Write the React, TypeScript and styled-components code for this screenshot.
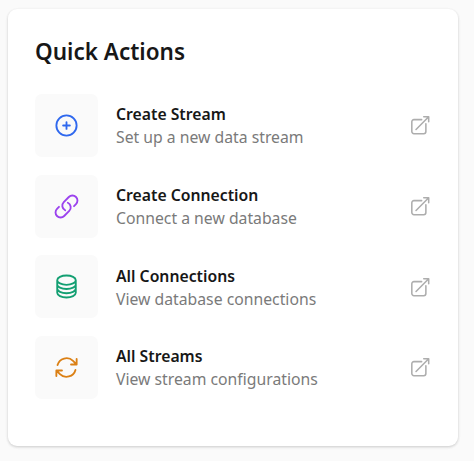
import React from "react";
import styled, { createGlobalStyle } from "styled-components";

const Global = createGlobalStyle`
  *{box-sizing:border-box}
  body{margin:0;background:#fafafa;font-family:"Noto Sans",sans-serif;color:#171717}
`;
const Page = styled.main`padding:9px 16px 15px 8px;height:461px;`;
const Card = styled.section`
  height:437px;background:#fff;border-radius:9px;padding:27px;
  box-shadow:0 1px 3px rgba(0,0,0,.1),0 1px 3px rgba(0,0,0,.1);
`;
const Title = styled.h2`margin:0 0 26.8px;font-size:22.5px;line-height:31px;font-weight:600;`;
const List = styled.div`display:grid;gap:18px;`;
const Row = styled.a`display:flex;align-items:center;height:62.8px;`;
const Tile = styled.span<{ $color: string }>`
  display:grid;place-items:center;width:63px;height:63px;margin-right:18px;
  border-radius:7px;background:#fafafa;color:${(p) => p.$color};
`;
const Text = styled.div`flex:1;line-height:23px;font-size:15.75px;padding-top:1.5px;`;
const Name = styled.div`font-weight:600;`;
const Note = styled.div`color:#7a7a7a;`;
const Icon = styled.svg<{ $size: number }>`
  display:block;width:${(p) => p.$size}px;height:${(p) => p.$size}px;fill:none;
  stroke:currentColor;stroke-width:1.65;stroke-linecap:round;stroke-linejoin:round;
`;
const Open = styled.span`color:#adadad;`;

const items = [
  { name: "Create Stream", note: "Set up a new data stream", color: "#2f68ee", d: "M12 9v6m3-3H9m12 0a9 9 0 1 1-18 0 9 9 0 0 1 18 0Z" },
  { name: "Create Connection", note: "Connect a new database", color: "#9b42ee", d: "M13.19 8.688a4.5 4.5 0 0 1 1.242 7.244l-4.5 4.5a4.5 4.5 0 0 1-6.364-6.364l1.757-1.757m13.35-.622 1.757-1.757a4.5 4.5 0 0 0-6.364-6.364l-4.5 4.5a4.5 4.5 0 0 0 1.242 7.244" },
  { name: "All Connections", note: "View database connections", color: "#139f72", d: "M20.25 6.375c0 2.278-3.694 4.125-8.25 4.125S3.75 8.653 3.75 6.375m16.5 0c0-2.278-3.694-4.125-8.25-4.125S3.75 4.097 3.75 6.375m16.5 0v11.25c0 2.278-3.694 4.125-8.25 4.125s-8.25-1.847-8.25-4.125V6.375m16.5 0v3.75m-16.5-3.75v3.75m16.5 0v3.75C20.25 16.153 16.556 18 12 18s-8.25-1.847-8.25-4.125v-3.75m16.5 0c0 2.278-3.694 4.125-8.25 4.125s-8.25-1.847-8.25-4.125" },
  { name: "All Streams", note: "View stream configurations", color: "#db8015", d: "M16.023 9.348h4.992v-.001M2.985 19.644v-4.992m0 0h4.992m-4.993 0 3.181 3.183a8.25 8.25 0 0 0 13.803-3.7M4.031 9.865a8.25 8.25 0 0 1 13.803-3.7l3.181 3.182m0-4.991v4.99" },
];

export default function App() {
  return (
    <Page>
      <Global />
      <Card>
        <Title>Quick Actions</Title>
        <List>
          {items.map((i) => (
            <Row key={i.name}>
              <Tile $color={i.color}><Icon $size={27} viewBox="0 0 24 24"><path d={i.d} /></Icon></Tile>
              <Text><Name>{i.name}</Name><Note>{i.note}</Note></Text>
              <Open>
                <Icon $size={22.5} viewBox="0 0 24 24">
                  <path d="M13.5 6H5.25A2.25 2.25 0 0 0 3 8.25v10.5A2.25 2.25 0 0 0 5.25 21h10.5A2.25 2.25 0 0 0 18 18.75V10.5m-10.5 6L21 3m0 0h-5.25M21 3v5.25" />
                </Icon>
              </Open>
            </Row>
          ))}
        </List>
      </Card>
    </Page>
  );
}
